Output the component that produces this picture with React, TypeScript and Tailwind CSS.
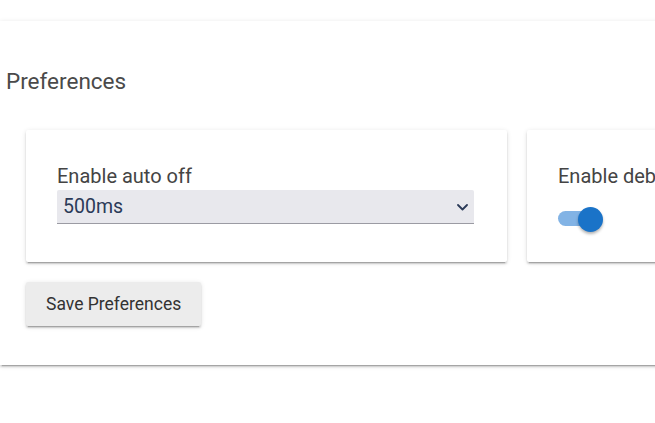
import React from "react";

export default function App() {
  return (
    <div
      className="w-[655px] h-[423px] overflow-hidden bg-white"
      style={{ fontFamily: "Roboto, 'Noto Sans', Arial, sans-serif" }}
    >
      <div className="pt-[21px]">
        <div className="w-[1100px] bg-white pl-[6px] pt-[46px] pb-[39px] shadow-[0_2px_2px_0_rgba(0,0,0,0.14),0_1px_5px_0_rgba(0,0,0,0.12),0_3px_1px_-2px_rgba(0,0,0,0.2)]">
          <h2 className="text-[22.5px] leading-[28px] text-[#4a4a4a] font-normal">Preferences</h2>
          <div className="pl-[20px] mt-[35px]">
            <div className="flex gap-[20px]">
              <div className="w-[481px] h-[132px] rounded-[2px] bg-white px-[31px] pt-[34px] shadow-[0_2px_2px_0_rgba(0,0,0,0.14),0_1px_5px_0_rgba(0,0,0,0.12),0_3px_1px_-2px_rgba(0,0,0,0.2)]">
                <div className="text-[20px] leading-[24px] text-[#444444]">Enable auto off</div>
                <div className="mt-[2px] w-[417px] h-[34px] flex items-center justify-between bg-[#e8e8ed] border-b border-[#9b9ba3] rounded-t-[2px] pl-[6px] pr-[6px]">
                  <span className="text-[19.5px] leading-[34px] text-[#2b3a58]">500ms</span>
                  <svg width="11" height="7" viewBox="0 0 11 7" className="mt-[1px]">
                    <path d="M1 1 L5.5 5.5 L10 1" fill="none" stroke="#2b3a58" strokeWidth="1.8" strokeLinecap="round" strokeLinejoin="round" />
                  </svg>
                </div>
              </div>
              <div className="w-[481px] h-[132px] rounded-[2px] bg-white px-[31px] pt-[34px] shadow-[0_2px_2px_0_rgba(0,0,0,0.14),0_1px_5px_0_rgba(0,0,0,0.12),0_3px_1px_-2px_rgba(0,0,0,0.2)]">
                <div className="text-[20px] leading-[24px] text-[#444444] whitespace-nowrap">Enable debug logging</div>
                <div className="mt-[18px] relative w-[46px] h-[25px]">
                  <div className="absolute left-0 top-[5px] w-[38px] h-[15px] rounded-full bg-[#82b3e5]" />
                  <div className="absolute left-[20px] top-[0.5px] w-[25px] h-[25px] rounded-full bg-[#1a73c8] shadow-[0_2px_3px_rgba(0,0,0,0.3)]" />
                </div>
              </div>
            </div>
            <button className="mt-[20px] h-[44px] px-[20px] rounded-[2px] bg-[#ececec] text-[17.5px] text-[#333333] shadow-[0_2px_2px_0_rgba(0,0,0,0.14),0_1px_5px_0_rgba(0,0,0,0.12),0_3px_1px_-2px_rgba(0,0,0,0.2)]">
              Save Preferences
            </button>
          </div>
        </div>
      </div>
    </div>
  );
}
